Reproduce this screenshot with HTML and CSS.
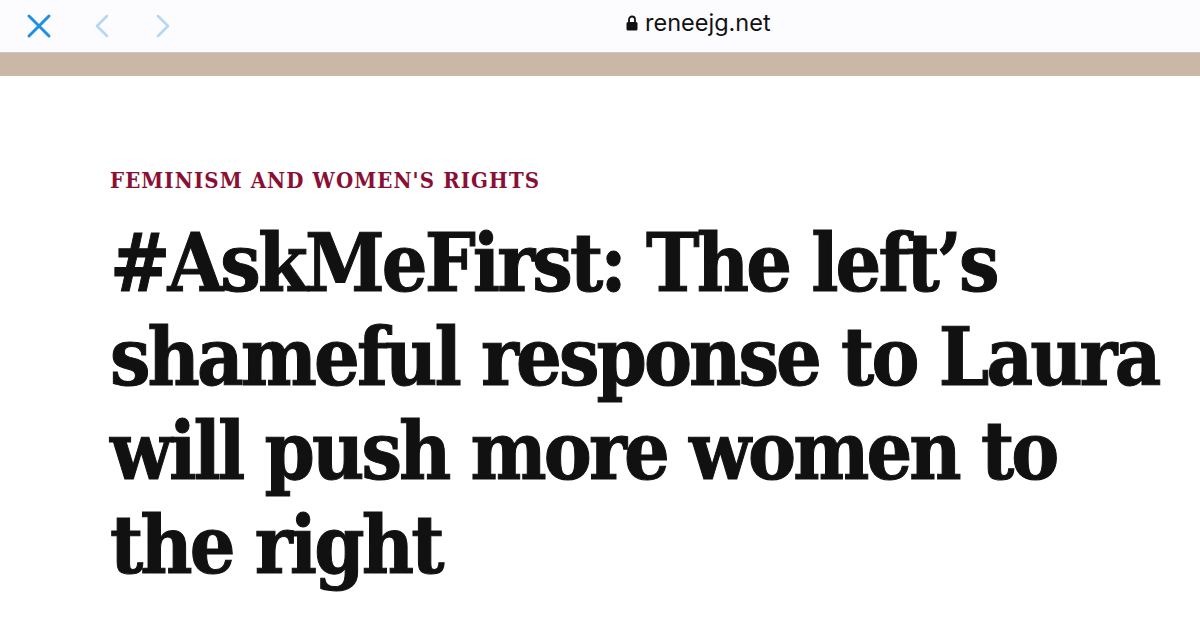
FILE: index.html
```html
<!DOCTYPE html>
<html>
<head>
<meta charset="utf-8">
<link rel="stylesheet" href="styles.css">
</head>
<body>
<header class="toolbar">
  <div class="nav">
    <svg class="icon close" width="26" height="26" viewBox="0 0 26 26"><path d="M3 3 L23 23 M23 3 L3 23" stroke="#1f8fe5" stroke-width="3" stroke-linecap="round" fill="none"/></svg>
    <svg class="icon back" width="20" height="26" viewBox="0 0 20 26"><path d="M15 3 L5 13 L15 23" stroke="#b5d8f2" stroke-width="2.6" stroke-linecap="round" stroke-linejoin="round" fill="none"/></svg>
    <svg class="icon fwd" width="20" height="26" viewBox="0 0 20 26"><path d="M5 3 L15 13 L5 23" stroke="#b5d8f2" stroke-width="2.6" stroke-linecap="round" stroke-linejoin="round" fill="none"/></svg>
  </div>
  <div class="url">
    <svg class="lock" width="12" height="16" viewBox="0 0 12 16"><path d="M3 7 V4.5 a3 3 0 0 1 6 0 V7" stroke="#111" stroke-width="1.8" fill="none"/><rect x="0.5" y="7" width="11" height="8.5" rx="1.5" fill="#111"/></svg>
    <span>reneejg.net</span>
  </div>
</header>
<div class="band"></div>
<main class="article">
  <div class="kicker">FEMINISM AND WOMEN'S RIGHTS</div>
  <h1 class="headline">#AskMeFirst: The left’s<br>shameful response to Laura<br>will push more women to<br>the right</h1>
</main>
</body>
</html>
```
FILE: styles.css
```css
html, body {
  margin: 0;
  padding: 0;
  background: #fff;
}
body {
  width: 1200px;
  height: 620px;
  overflow: hidden;
}
.toolbar {
  height: 52px;
  background: #fcfcfe;
  display: flex;
  align-items: center;
  position: relative;
}
.nav {
  display: flex;
  align-items: center;
  padding-left: 26px;
}
.icon { display: block; }
.close { margin-right: 40px; }
.back { margin-right: 41px; }
.url {
  position: absolute;
  left: 626px;
  top: 8px;
  display: flex;
  align-items: center;
  gap: 7px;
  font-family: "Inter", "Liberation Sans", sans-serif;
  font-size: 23.5px;
  color: #111;
}
.band {
  height: 23px;
  background: #cab7a5;
  border-top: 1px solid #c7c9c2;
}
.article {
  padding: 91px 0 0 110px;
}
.kicker {
  font-family: "DejaVu Serif Condensed", "DejaVu Serif", serif;
  font-weight: bold;
  font-size: 22px;
  letter-spacing: 1.1px;
  color: #8a0f35;
  line-height: 26px;
}
.headline {
  margin: 23px 0 0 0;
  font-family: "DejaVu Serif Condensed", "DejaVu Serif", serif;
  font-weight: bold;
  font-size: 80px;
  line-height: 94px;
  color: #111;
  letter-spacing: -2.9px;
  -webkit-text-stroke: 1px #111;
  white-space: nowrap;
}
```
